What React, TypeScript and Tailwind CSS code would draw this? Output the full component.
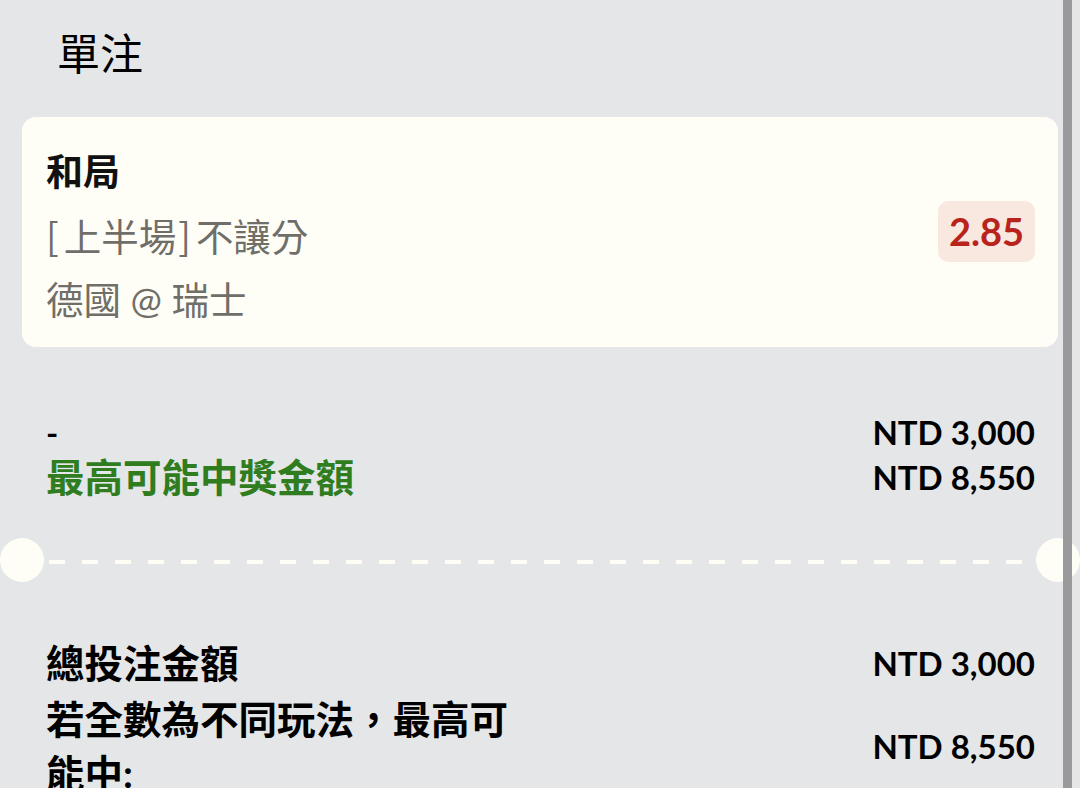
import React from "react";

const font = { fontFamily: 'Lato, "Noto Sans CJK TC", sans-serif' };
const cjk = { fontFamily: '"Noto Sans CJK TC", sans-serif' };

export default function App() {
  return (
    <div
      className="relative w-[1080px] h-[788px] overflow-hidden bg-[#e5e6e8] text-black"
      style={font}
    >
      <div className="flex flex-col">
        {/* Title */}
        <div className="h-[117px] pt-[30px] pl-[57px]">
          <div className="text-[43px] leading-[43px] font-normal" style={cjk}>單注</div>
        </div>

        {/* Bet card */}
        <div className="mx-[22px] w-[1036px] h-[230px] rounded-[14px] bg-[#fffef6] pt-[24px] pb-[17px] pl-[24px] pr-[23px] flex items-center justify-between">
          <div className="flex flex-col">
            <div className="text-[37px] leading-[63px] font-bold text-[#111]">和局</div>
            <div className="text-[37.5px] leading-[63px] text-[#6f6e69]">
              <span className="inline-block pr-[5px]" style={cjk}>[</span>上半場<span className="inline-block pl-[2px] pr-[5px]" style={cjk}>]</span>不讓分
            </div>
            <div className="text-[37.5px] leading-[63px] text-[#6f6e69]">德國 @ 瑞士</div>
          </div>
          <div className="mb-[9px] h-[61px] w-[97px] rounded-[10px] bg-[#f9e8e0] flex items-center justify-center">
            <span className="text-[38px] font-bold text-[#b8241c] leading-none">2.85</span>
          </div>
        </div>

        {/* Amount rows */}
        <div className="mt-[63px] pl-[46px] pr-[45px] flex flex-col">
          <div className="flex items-center justify-between h-[45px]">
            <span className="text-[33px] font-bold leading-[45px]">-</span>
            <span className="text-[33px] font-bold leading-[45px]">NTD 3,000</span>
          </div>
          <div className="flex items-center justify-between h-[45px]">
            <span className="text-[38.5px] font-bold leading-[45px] text-[#2f7d1f]">最高可能中獎金額</span>
            <span className="text-[33px] font-bold leading-[45px]">NTD 8,550</span>
          </div>
        </div>

        {/* Separator */}
        <div className="mt-[38px] h-[44px] flex items-center gap-[5px]">
          <div className="w-[44px] h-[44px] rounded-full bg-[#fffef6] shrink-0" />
          <div className="flex-1 h-[4px] mt-[3px] bg-[repeating-linear-gradient(90deg,#fffef6_0px,#fffef6_16px,transparent_16px,transparent_33px)]" />
          <div className="w-[44px] h-[44px] rounded-full bg-[#fffef6] shrink-0" />
        </div>

        {/* Totals */}
        <div className="mt-[54px] pl-[46px] pr-[45px] flex flex-col gap-[2px]">
          <div className="flex items-center justify-between">
            <span className="text-[38.5px] font-bold leading-[54px]">總投注金額</span>
            <span className="text-[33px] font-bold leading-[54px]">NTD 3,000</span>
          </div>
          <div className="flex items-center justify-between">
            <span className="w-[485px] text-[38.5px] font-bold leading-[54px]">若全數為不同玩法，最高可能中:</span>
            <span className="text-[33px] font-bold leading-[54px]">NTD 8,550</span>
          </div>
        </div>
      </div>

      {/* Scrollbar */}
      <div className="absolute top-0 bottom-0 right-[8px] w-[9px] bg-[#9a9a9c]" />
    </div>
  );
}
